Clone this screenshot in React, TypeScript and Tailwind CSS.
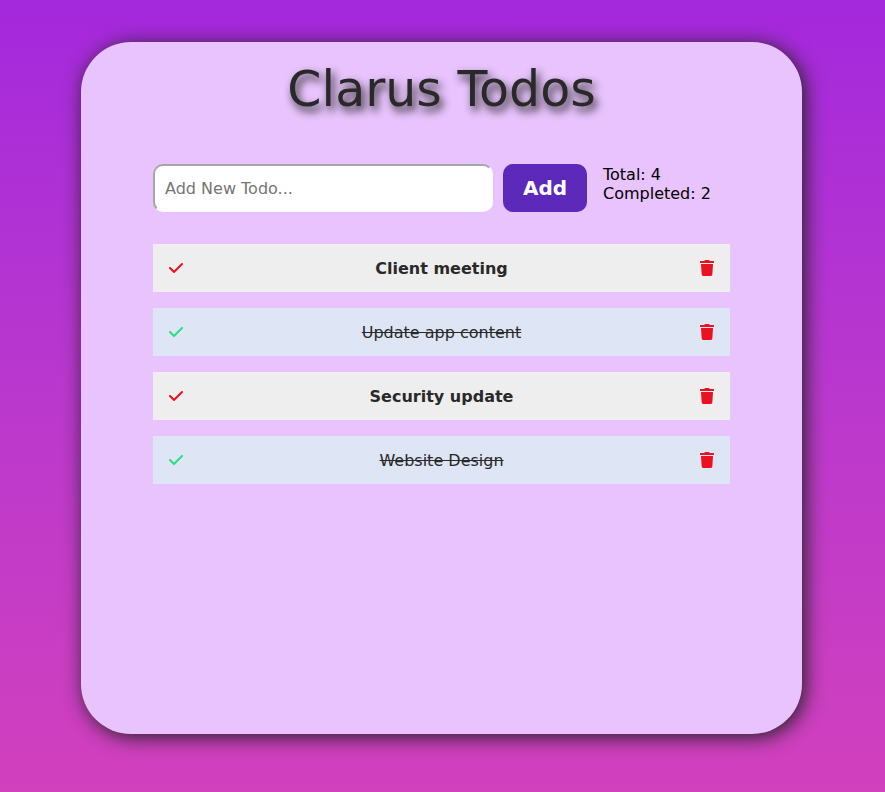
import { useState, type FormEvent } from "react";
import { FaTrash } from "react-icons/fa";
import { FaCheck } from "react-icons/fa6";

type Todo = { id: number; text: string; done: boolean };

const initialTodos: Todo[] = [
  { id: 1, text: "Client meeting", done: false },
  { id: 2, text: "Update app content", done: true },
  { id: 3, text: "Security update", done: false },
  { id: 4, text: "Website Design", done: true },
];

export default function App() {
  const [todos, setTodos] = useState<Todo[]>(initialTodos);
  const [text, setText] = useState("");

  const addTodo = (event: FormEvent) => {
    event.preventDefault();
    if (!text.trim()) return;
    setTodos([...todos, { id: Date.now(), text: text.trim(), done: false }]);
    setText("");
  };

  const toggle = (id: number) =>
    setTodos(todos.map((t) => (t.id === id ? { ...t, done: !t.done } : t)));

  const remove = (id: number) => setTodos(todos.filter((t) => t.id !== id));

  return (
    <div className="flex min-h-screen flex-col bg-linear-to-b from-[#a428dc] to-[#d140bd] pt-[42px] pr-[83px] pb-[58px] pl-[81px] font-[Verdana,'DejaVu_Sans',sans-serif] text-base text-black">
      <main className="mx-auto flex w-full max-w-[721px] grow flex-col rounded-[50px] bg-[#e8c3fd] px-[72px] pt-5 pb-16 shadow-[3px_3px_20px_#222222]">
        <h1 className="text-center text-[49px] leading-[56px] text-[#292929] [text-shadow:3px_5px_8px_#222222]">
          Clarus Todos
        </h1>

        <form onSubmit={addTodo} className="mt-[46px] flex h-12">
          <input
            type="text"
            aria-label="New todo"
            value={text}
            onChange={(e) => setText(e.target.value)}
            placeholder="Add New Todo..."
            className="min-w-0 grow rounded-[10px] border-2 border-t-[#a6a6a6] border-r-white border-b-white border-l-[#a6a6a6] bg-white px-2.5 pt-0.5 placeholder:text-[#757575]"
          />
          <button
            type="submit"
            className="ml-2.5 w-[84px] shrink-0 rounded-[10px] bg-[#5d29ba] text-xl font-bold text-white"
          >
            Add
          </button>
          <div className="ml-4 w-[127px] shrink-0 pt-px leading-[19px]">
            <p>Total: {todos.length}</p>
            <p>Completed: {todos.filter((t) => t.done).length}</p>
          </div>
        </form>

        <ul className="mt-8 flex flex-col gap-4">
          {todos.map((todo) => (
            <li
              key={todo.id}
              className={`flex h-12 items-center justify-between px-4 text-[#292929] ${
                todo.done ? "bg-[#dee5f5]" : "bg-[#eeeeee]"
              }`}
            >
              <button
                type="button"
                aria-label={`Toggle ${todo.text}`}
                onClick={() => toggle(todo.id)}
                className={todo.done ? "text-[#2be080]" : "text-[#ea1220]"}
              >
                <FaCheck className="h-4 w-3.5" />
              </button>
              <p className={`pt-0.5 ${todo.done ? "line-through" : "font-bold"}`}>{todo.text}</p>
              <button
                type="button"
                aria-label={`Delete ${todo.text}`}
                onClick={() => remove(todo.id)}
                className="text-[#ea1220]"
              >
                <FaTrash className="h-4 w-3.5" />
              </button>
            </li>
          ))}
        </ul>
      </main>
    </div>
  );
}
